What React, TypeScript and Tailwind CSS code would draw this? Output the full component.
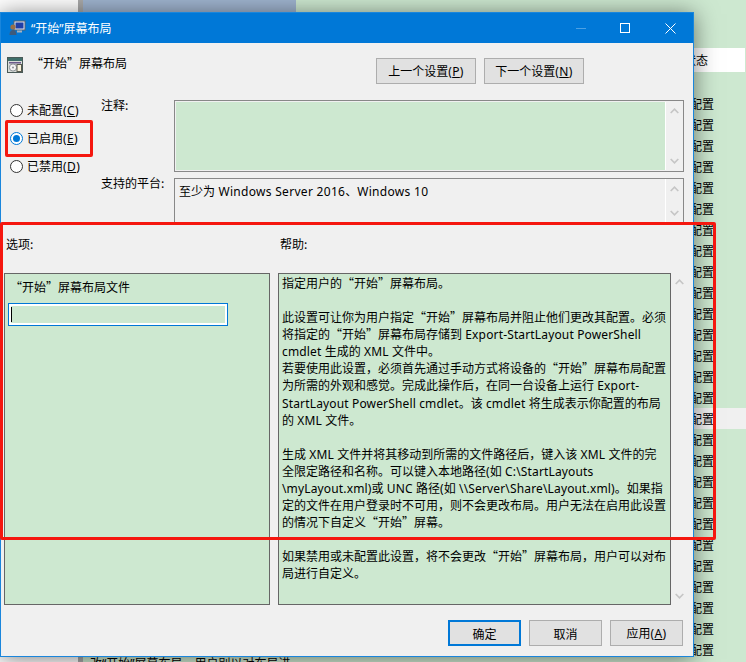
import type { ReactNode } from 'react'

const helpLines = [
    '指定用户的“开始”屏幕布局。',
    '',
    '此设置可让你为用户指定“开始”屏幕布局并阻止他们更改其配置。必须',
    '将指定的“开始”屏幕布局存储到 Export-StartLayout PowerShell',
    'cmdlet 生成的 XML 文件中。',
    '若要使用此设置，必须首先通过手动方式将设备的“开始”屏幕布局配置',
    '为所需的外观和感觉。完成此操作后，在同一台设备上运行 Export-',
    'StartLayout PowerShell cmdlet。该 cmdlet 将生成表示你配置的布局',
    '的 XML 文件。',
    '',
    '生成 XML 文件并将其移动到所需的文件路径后，键入该 XML 文件的完',
    '全限定路径和名称。可以键入本地路径(如 C:\\StartLayouts',
    '\\myLayout.xml)或 UNC 路径(如 \\\\Server\\Share\\Layout.xml)。如果指',
    '定的文件在用户登录时不可用，则不会更改布局。用户无法在启用此设置',
    '的情况下自定义“开始”屏幕。',
    '',
    '如果禁用或未配置此设置，将不会更改“开始”屏幕布局，用户可以对布',
    '局进行自定义。',
]

const rows = Array.from({ length: 27 }, (_, i) => i)

// latin runs get their own font so the curly quotes stay full width in the CJK face
function Mixed({ text }: { text: string }) {
    return (
        <>
            {text.split(/([A-Za-z0-9 .:\\()\-]+)/).map((part, i) =>
                i % 2 === 1 ? (
                    <span key={i} className="font-['Noto_Sans',sans-serif] tracking-[0.15px]">
                        {part}
                    </span>
                ) : (
                    <span key={i}>{part}</span>
                )
            )}
        </>
    )
}

function Chevron({ up }: { up?: boolean }) {
    return (
        <svg width="9" height="6" viewBox="0 0 9 6" className="block">
            <polyline
                points={up ? '0.7,5 4.5,1.2 8.3,5' : '0.7,1 4.5,4.8 8.3,1'}
                fill="none"
                stroke="#c6c6c6"
                strokeWidth="1.7"
            />
        </svg>
    )
}

function Mnemonic({ letter }: { letter: string }) {
    return (
        <span className="font-['Noto_Sans',sans-serif] tracking-[0.4px]">
            (<u>{letter}</u>)
        </span>
    )
}

function Radio({ checked, label, mnemonic }: { checked?: boolean; label: string; mnemonic: string }) {
    return (
        <div className="flex h-[28px] items-center gap-[4px]">
            <span
                className={`flex h-[13px] w-[13px] items-center justify-center rounded-full border bg-white ${
                    checked ? 'border-[#0078d7]' : 'border-[#333333]'
                }`}
            >
                {checked && <span className="h-[7px] w-[7px] rounded-full bg-[#0078d7]" />}
            </span>
            <span>
                {label}
                <Mnemonic letter={mnemonic} />
            </span>
        </div>
    )
}

function NavButton({ children, className }: { children: ReactNode; className: string }) {
    return (
        <div className={`flex h-[26px] items-center justify-center bg-[#e1e1e1] ${className}`}>{children}</div>
    )
}

function TitleIcon() {
    return (
        <svg width="17" height="16" viewBox="0 0 17 16" className="shrink-0">
            <rect x="5" y="1" width="11" height="9" fill="#dfe6f2" stroke="#56606e" />
            <rect x="6.5" y="2.5" width="8" height="6" fill="#1f3fa8" />
            <rect x="8" y="10.5" width="5" height="2" fill="#aab2bd" />
            <circle cx="4" cy="7" r="2.6" fill="#9a7048" />
            <path d="M0.5 15c0-3.5 1.5-5 3.5-5s3.5 1.5 3.500 5z" fill="#3d5a7c" />
        </svg>
    )
}

function PolicyIcon() {
    return (
        <svg width="16" height="16" viewBox="0 0 16 16" className="shrink-0">
            <rect x="0.500" y="0.500" width="15" height="15" fill="#d8dcd8" stroke="#4a5a58" />
            <rect x="1" y="1" width="14" height="3" fill="#3f6f6a" />
            <rect x="2" y="5" width="12" height="1.500" fill="#6a5a8a" />
            <circle cx="6" cy="10.500" r="3.600" fill="#f4f4f4" stroke="#8a8f94" />
            <circle cx="6" cy="10.500" r="1" fill="#8a8f94" />
            <rect x="10" y="7.500" width="4.500" height="7" fill="#f7f3dc" stroke="#5a5a50" />
        </svg>
    )
}

export default function App() {
    return (
        <div className="relative h-[662px] w-[746px] overflow-hidden bg-white font-['Noto_Sans_CJK_SC',sans-serif] text-[12px] leading-[17px] text-black">
            {/* window behind the dialog */}
            <div className="flex h-full">
                <div className="w-[78px] bg-white" />
                <div className="w-[5px] bg-[#a9a9a9]" />
                <div className="flex flex-1 bg-[#cde8d0]">
                    <div className="flex flex-1 flex-col justify-between">
                        <div className="h-[12px] w-[213px] bg-[#9fb4cf]" />
                        <div className="h-[7px] pl-[7px] font-['Noto_Sans','Noto_Sans_CJK_SC',sans-serif]">
                            改“开始”屏幕布局，用户别以对布局进
                        </div>
                    </div>
                    <div className="w-[68px]">
                        <div className="mt-[48px] mr-[1px] h-[24px] bg-white pl-[6px] leading-[24px]">状态</div>
                        <div className="mt-[21px]">
                            {rows.map((i) => (
                                <div key={i} className={`h-[21px] leading-[21px] ${i === 15 ? 'bg-[#f0f0f0]' : ''}`}>
                                    未配置
                                </div>
                            ))}
                        </div>
                    </div>
                </div>
            </div>

            {/* dialog */}
            <div className="absolute top-[12px] left-0 flex h-[645px] w-[694px] flex-col border border-[#1a86dc] bg-[#f0f0f0] shadow-[0_2px_22px_rgba(0,0,0,0.5)]">
                <div className="flex h-[30px] shrink-0 items-center bg-[#0078d7] pl-[8px] text-white">
                    <TitleIcon />
                    <span className="ml-[5px] font-['Noto_Sans','Noto_Sans_CJK_SC',sans-serif]">“开始”屏幕布局</span>
                    <div className="ml-auto flex items-center">
                        <div className="mr-[34px] h-px w-[10px] bg-[#4da1e4]" />
                        <div className="mr-[35px] h-[10px] w-[10px] border border-white" />
                        <svg width="11" height="11" viewBox="0 0 11 11" className="mr-[17px]">
                            <path d="M0.500 0.500L10.500 10.500M10.500 0.500L0.500 10.500" stroke="white" strokeWidth="1" />
                        </svg>
                    </div>
                </div>

                <div className="flex h-[57px] shrink-0 items-start">
                    <div className="mt-[14px] ml-[6px]">
                        <PolicyIcon />
                    </div>
                    <div className="mt-[11px] ml-[8px] w-[345px]">“开始”屏幕布局</div>
                    <div className="mt-[15px] flex gap-[8px]">
                        <NavButton className="w-[100px] border border-[#adadad]">
                            <span>
                                上一个设置
                                <Mnemonic letter="P" />
                            </span>
                        </NavButton>
                        <NavButton className="w-[100px] border border-[#adadad]">
                            <span>
                                下一个设置
                                <Mnemonic letter="N" />
                            </span>
                        </NavButton>
                    </div>
                </div>

                <div className="flex h-[124px] shrink-0">
                    <div className="w-[100px] shrink-0 pl-[9px]">
                        <div className="-mt-[4px]">
                            <Radio label="未配置" mnemonic="C" />
                            <Radio checked label="已启用" mnemonic="E" />
                            <Radio label="已禁用" mnemonic="D" />
                        </div>
                    </div>
                    <div className="w-[73px] shrink-0">
                        <div className="mt-[-4px]">注释:</div>
                        <div className="mt-[61px]">支持的平台:</div>
                    </div>
                    <div className="flex w-[510px] flex-col gap-[6px]">
                        <div className="flex h-[72px] border border-[#888888]">
                            <div className="m-px mr-0 flex-1 border-r border-white bg-[#cde8d0]" />
                            <div className="flex w-[17px] flex-col items-center justify-between py-[7px]">
                                <Chevron up />
                                <Chevron />
                            </div>
                        </div>
                        <div className="flex h-[46px] border border-[#888888] bg-[#f0f0f0]">
                            <div className="flex-1 border-r border-white pt-[3px] pl-[4px]">
                                至少为
                                <span className="font-['Noto_Sans',sans-serif] tracking-[0.3px]"> Windows Server 2016</span>
                                、
                                <span className="font-['Noto_Sans',sans-serif] tracking-[0.3px]">Windows 10</span>
                            </div>
                            <div className="flex w-[17px] flex-col items-center justify-between py-[7px]">
                                <Chevron up />
                                <Chevron />
                            </div>
                        </div>
                    </div>
                </div>

                <div className="flex h-[49px] shrink-0 pt-[11px] pl-[5px]">
                    <div className="w-[274px]">选项:</div>
                    <div>帮助:</div>
                </div>

                <div className="flex h-[332px] shrink-0 pl-[3px]">
                    <div className="w-[266px] border border-[#666666] bg-[#cde8d0] pt-[4px]">
                        <div className="pl-[5px]">“开始”屏幕布局文件</div>
                        <div className="mt-[8px] ml-[3px] flex h-[23px] w-[220px] items-center border border-[#0078d7] outline-2 -outline-offset-3 outline-white">
                            <div className="ml-[2px] h-[15px] w-px bg-black" />
                        </div>
                    </div>
                    <div className="ml-[8px] w-[393px] border border-[#666666] bg-[#cde8d0] pl-[3px]">
                        {helpLines.map((line, i) => (
                            <div key={i} className="h-[17.080px] leading-[17.080px] whitespace-pre">
                                <Mixed text={line} />
                            </div>
                        ))}
                    </div>
                    <div className="flex w-[17px] flex-col items-center justify-between py-[6px]">
                        <Chevron up />
                        <Chevron />
                    </div>
                </div>

                <div className="flex justify-end gap-[8px] pt-[15px] pr-[10px]">
                    <NavButton className="w-[73px] border-2 border-[#0078d7]">确定</NavButton>
                    <NavButton className="w-[73px] border border-[#adadad]">取消</NavButton>
                    <NavButton className="w-[73px] border border-[#adadad]">
                        <span>
                            应用
                            <Mnemonic letter="A" />
                        </span>
                    </NavButton>
                </div>
            </div>

            {/* red annotation boxes */}
            <div className="absolute top-[120px] left-[5px] h-[37px] w-[88px] rounded-[2px] border-[3px] border-[#f5170f]" />
            <div className="absolute top-[222px] left-0 h-[318px] w-[716px] rounded-[2px] border-[3px] border-[#f5170f]" />
        </div>
    )
}
